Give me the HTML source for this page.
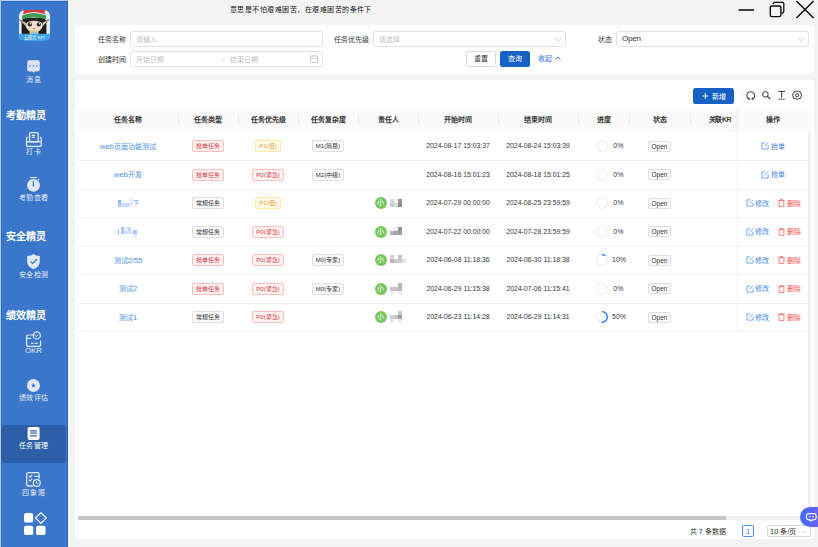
<!DOCTYPE html>
<html lang="zh-CN"><head><meta charset="utf-8"><style>
*{box-sizing:border-box;margin:0;padding:0}
html,body{width:818px;height:547px;overflow:hidden;background:#f3f3f3;font-family:"Liberation Sans",sans-serif;color:#333}
div,span{position:absolute;white-space:nowrap}
svg{position:absolute;overflow:visible}
#side{left:0;top:0;width:68px;height:547px;background:#3a76c9;border-right:1px solid #2864c3}
.sl{left:0;width:67px;text-align:center;color:#e8eef9;font-size:7px;letter-spacing:0.55px;text-indent:0.55px;line-height:9px}
.sh{left:5.5px;color:#fff;font-size:10px;font-weight:bold;line-height:11px}
.card{background:#fff;border-radius:3px}
.lbl{font-size:7px;line-height:9px;color:#333}
.inp{border:1px solid #e0e0e0;border-radius:2.5px;background:#fff;height:16px}
.ph{font-size:7px;line-height:9px;color:#c0c0c0}
.th{top:108px;height:24px;font-size:7px;font-weight:bold;line-height:24px;text-align:center;color:#3a3a3a}
.sep{top:114px;width:1px;height:11px;background:#ebebeb}
.rb{left:78px;width:730px;height:1px;background:#f0f0f0}
.cell{text-align:center;line-height:11px;height:11px}
.nm{color:#4d8fe6;font-size:7px}
.nm b{font-weight:normal;font-size:7.5px}
.tag{position:relative;display:inline-block;height:12px;line-height:10px;font-size:6px;border:1px solid;border-radius:2px;vertical-align:top}
.tr{color:#d6343c;background:#fff3f2;border-color:#ffbdb9}
.ty{color:#e0a22e;background:#fffbeb;border-color:#ffe6a1}
.tg{color:#333;background:#fafafa;border-color:#dedede}
.dt{font-size:6.85px;color:#333;line-height:11px}
.pct{font-size:7px;color:#333;line-height:11px}
.act{font-size:7px;line-height:11px}
</style></head><body>
<div id="side"></div>
<div style="left:1px;top:1px;width:66px;height:1px;background:#2f6cc7"></div>
<div style="left:1px;top:1px;width:1px;height:546px;background:#2f6cc7"></div>
<div style="left:0;top:0;width:68px;height:1px;background:#b7cce9"></div>
<div style="left:0;top:0;width:1px;height:547px;background:#b7cce9"></div>
<svg style="left:19px;top:10px" width="31" height="31" viewBox="0 0 31 31">
<defs><clipPath id="lc"><rect width="31" height="31" rx="6"/></clipPath></defs>
<g clip-path="url(#lc)">
<rect width="31" height="31" fill="#e6eef8"/>
<path d="M2.6 31 L2.6 12 Q3 8 8 8 H22 Q27 8 27.4 12 L27.4 31 Z" fill="#1d1d1d"/>
<path d="M0.2 9.6 L7 12.6 L7.4 17 Z" fill="#f1cdb8" stroke="#333" stroke-width="0.5"/>
<path d="M30 9.6 L23.4 12.6 L23 17 Z" fill="#f1cdb8" stroke="#333" stroke-width="0.5"/>
<ellipse cx="15.2" cy="15.6" rx="8.4" ry="6.6" fill="#f4dccf"/>
<path d="M6.6 13 Q15 8.4 23.8 13 L23.8 10.6 Q15 7.4 6.6 10.6 Z" fill="#1d1d1d"/>
<path d="M4 0 L6 3 Q15 -1 24.6 3 L27 0 Z" fill="#d93a3c"/>
<path d="M3.2 5.4 Q15 0.4 27 5.4 L27.2 9.2 Q15 5.6 3 9.2 Z" fill="#3f9a52"/>
<path d="M3.6 4.6 Q15 -0.6 26.6 4.6 L25 1.6 Q15 -2 5 1.6 Z" fill="#d93a3c"/>
<circle cx="10.8" cy="14.4" r="2.1" fill="#2b2b2b"/><circle cx="19.8" cy="14.4" r="2.1" fill="#2b2b2b"/>
<circle cx="11.3" cy="13.8" r="0.7" fill="#fff"/><circle cx="20.3" cy="13.8" r="0.7" fill="#fff"/>
<path d="M14 18.6 H16.4" stroke="#a55" stroke-width="0.8"/>
<rect x="10.6" y="20.4" width="8.8" height="4.4" fill="#f2d24a"/>
<rect x="12" y="21.2" width="6" height="3" fill="#9cc4ea"/>
<rect x="0" y="23.8" width="31" height="7.2" fill="#3aa4ee"/>
<text x="15.5" y="29.4" font-size="4.2" fill="#fff" text-anchor="middle" font-family="Liberation Sans">云精灵·KPI</text>
</g></svg>
<svg style="left:27px;top:60px" width="13" height="13" viewBox="0 0 13 13">
<path d="M2 0.2 H11 A1.8 1.8 0 0 1 12.8 2 V9.6 A1.8 1.8 0 0 1 11 11.4 H7.6 L6.4 12.7 L5.2 11.4 H2 A1.8 1.8 0 0 1 0.2 9.6 V2 A1.8 1.8 0 0 1 2 0.2 Z" fill="#dde3f0"/>
<rect x="2.3" y="5.2" width="1.5" height="1.5" fill="#6b8cc6"/><rect x="5.7" y="5.2" width="1.5" height="1.5" fill="#6b8cc6"/><rect x="9.3" y="5.2" width="1.5" height="1.5" fill="#6b8cc6"/>
</svg>
<div class="sl" style="top:74.5px">消息</div>
<div class="sh" style="top:110px">考勤精灵</div>
<svg style="left:26px;top:132px" width="16" height="15" viewBox="0 0 16 15">
<rect x="3.6" y="0.6" width="8.6" height="9.2" rx="1.2" fill="none" stroke="#e4e9f5" stroke-width="1.3"/>
<path d="M5.8 3.4 H9 M5.8 5.4 H9" stroke="#e4e9f5" stroke-width="1.1"/>
<path d="M1.7 5.2 Q0.6 5.5 0.6 6.6 V13.2 Q0.6 14.4 1.8 14.4 H14 Q15.2 14.4 15.2 13.2 V6.6 Q15.2 5.5 14.1 5.2" fill="none" stroke="#e4e9f5" stroke-width="1.3"/>
<path d="M1 9.8 H15" stroke="#e4e9f5" stroke-width="1.3"/>
</svg>
<div class="sl" style="top:147px">打卡</div>
<svg style="left:26px;top:177px" width="15" height="15" viewBox="0 0 15 15">
<rect x="4" y="0" width="7" height="1.1" fill="#e0e6f2"/>
<circle cx="7.5" cy="8.3" r="6.4" fill="#e0e6f2"/>
<path d="M11.8 3 L13.2 1.9" stroke="#e0e6f2" stroke-width="1.2"/>
<path d="M7.4 4 V8.6" stroke="#3a76cb" stroke-width="1.1"/>
<circle cx="7.4" cy="8.6" r="0.9" fill="#3a76cb"/>
</svg>
<div class="sl" style="top:192.5px">考勤查看</div>
<div class="sh" style="top:231px">安全精灵</div>
<svg style="left:27px;top:254px" width="14" height="16" viewBox="0 0 14 16">
<path d="M6.5 0 Q4.5 1.8 0.2 2 V7.8 Q0.2 12.8 6.5 15.3 Q12.8 12.8 12.8 7.8 V2 Q8.5 1.8 6.5 0 Z" fill="#e0e6f2"/>
<path d="M3.6 7.4 L5.6 9.4 L9.8 5.3" fill="none" stroke="#3a76cb" stroke-width="1.3"/>
</svg>
<div class="sl" style="top:270px">安全检测</div>
<div class="sh" style="top:309.5px">绩效精灵</div>
<svg style="left:26px;top:331px" width="16" height="16" viewBox="0 0 16 16">
<path d="M9 4 H2.6 Q0.6 4 0.6 6 V13.4 Q0.6 15.4 2.6 15.4 H12.6 Q14.6 15.4 14.6 13.4 V9.4" fill="none" stroke="#e0e6f2" stroke-width="1.2"/>
<path d="M0.8 7.4 H5.2" stroke="#e0e6f2" stroke-width="1.2"/>
<circle cx="10.8" cy="4.4" r="3.6" fill="none" stroke="#e0e6f2" stroke-width="1.2"/>
<path d="M9.2 4.6 L10.4 5.6 L12.4 3.4" fill="none" stroke="#e0e6f2" stroke-width="1"/>
<path d="M5 12.4 H7.6 M8.6 12.4 H11.6" stroke="#e0e6f2" stroke-width="1.1"/>
</svg>
<div class="sl" style="top:346px;font-size:7.8px;letter-spacing:0;text-indent:0">OKR</div>
<svg style="left:27px;top:379px" width="14" height="14" viewBox="0 0 14 14">
<circle cx="6.5" cy="6.5" r="6.5" fill="#e0e6f2"/>
<path d="M6.5 4.1 L7.2 5.7 L8.9 5.8 L7.6 6.9 L8 8.6 L6.5 7.7 L5 8.6 L5.4 6.9 L4.1 5.8 L5.8 5.7 Z" fill="#3a76cb"/>
</svg>
<div class="sl" style="top:393px">绩效评估</div>
<div style="left:1px;top:425px;width:65px;height:38px;background:#2d5fa8;border-radius:4px"></div>
<svg style="left:27px;top:427px" width="13" height="13" viewBox="0 0 13 13">
<rect x="0.6" y="0" width="12" height="12.9" rx="2" fill="#fff"/>
<path d="M3.3 3.8 H9.8 M3.3 6.2 H9.8 M3.3 8.8 H9.8" stroke="#2d5fa8" stroke-width="1.2"/>
</svg>
<div class="sl" style="top:441px;color:#fff">任务管理</div>
<svg style="left:26px;top:472px" width="16" height="16" viewBox="0 0 16 16">
<path d="M7.4 14 H2.4 Q0.7 14 0.7 12.3 V2.4 Q0.7 0.7 2.4 0.7 H11.4 Q13.1 0.7 13.1 2.4 V6.8" fill="none" stroke="#e3e9f5" stroke-width="1.3"/>
<path d="M2.9 3.9 L4.2 5.1 L6.2 3 M2.9 7.8 L4.2 9 L6.2 6.9" fill="none" stroke="#e3e9f5" stroke-width="1.2"/>
<path d="M8.4 4.4 H12.8" stroke="#e3e9f5" stroke-width="1.2"/>
<circle cx="10.8" cy="11" r="3.4" fill="none" stroke="#e3e9f5" stroke-width="1.3"/>
<path d="M10.5 9.4 V11.3 H12.2" fill="none" stroke="#e3e9f5" stroke-width="1"/>
</svg>
<div class="sl" style="top:488px">四象限</div>
<svg style="left:23px;top:512px" width="25" height="25" viewBox="0 0 25 25">
<rect x="1" y="1" width="9.2" height="9.6" rx="2.2" fill="#fff"/>
<rect x="1" y="13.7" width="9.2" height="9.4" rx="2.2" fill="#fff"/>
<rect x="13" y="13.7" width="9.6" height="9.4" rx="2.2" fill="#fff"/>
<path d="M17.9 0.7 L23.3 5.9 L17.9 11.3 L12.5 5.9 Z" fill="none" stroke="#fff" stroke-width="1.2" stroke-linejoin="round"/>
</svg>
<div style="left:230px;top:5px;font-size:7px;letter-spacing:0.47px;line-height:9px;color:#111">意思是不怕艰难困苦，在艰难困苦的条件下</div>
<svg style="left:736px;top:0" width="82" height="20" viewBox="0 0 82 20">
<path d="M2.6 10 H18" stroke="#111" stroke-width="1.6"/>
<rect x="34.3" y="6" width="10.6" height="10.6" rx="1.6" fill="none" stroke="#111" stroke-width="1.4"/>
<path d="M37.2 4.2 V3.8 Q37.2 2.4 38.6 2.4 H46.4 Q47.8 2.4 47.8 3.8 V11.6 Q47.8 13 46.4 13 H45.6" fill="none" stroke="#111" stroke-width="1.3"/>
<path d="M60.4 1 L77.6 18 M77.6 1 L60.4 18" stroke="#111" stroke-width="1.5"/>
</svg>
<div class="card" style="left:75px;top:25px;width:739px;height:49px"></div>
<div class="card" style="left:75px;top:80px;width:739px;height:459px"></div>
<div class="lbl" style="left:98px;top:35px">任务名称</div>
<div class="inp" style="left:130px;top:31px;width:193px"></div>
<div class="ph" style="left:136px;top:35px">请输入</div>
<div class="lbl" style="left:98px;top:55px">创建时间</div>
<div class="inp" style="left:130px;top:51px;width:193px"></div>
<div class="ph" style="left:136px;top:55px">开始日期</div>
<div class="ph" style="left:218px;top:54px;font-size:8px;letter-spacing:0;color:#b8b8b8">&#8594;</div>
<div class="ph" style="left:230px;top:55px">结束日期</div>
<svg style="left:310px;top:55px" width="8" height="8" viewBox="0 0 8 8">
<rect x="0.5" y="1" width="7" height="6.5" rx="0.8" fill="none" stroke="#bbb" stroke-width="0.8"/>
<path d="M0.5 3.2 H7.5 M2.3 0 V1.6 M5.7 0 V1.6" stroke="#bbb" stroke-width="0.8"/>
</svg>
<div class="lbl" style="left:334px;top:35px">任务优先级</div>
<div class="inp" style="left:373px;top:31px;width:193px"></div>
<div class="ph" style="left:379px;top:35px">请选择</div>
<svg style="left:555px;top:36.5px" width="7" height="5" viewBox="0 0 7 5"><path d="M0.5 1 L3.5 4 L6.5 1" fill="none" stroke="#bbb" stroke-width="0.8"/></svg>
<div class="lbl" style="left:598px;top:35px">状态</div>
<div class="inp" style="left:616px;top:31px;width:193px"></div>
<div style="left:622px;top:34px;font-size:8px;line-height:9px;color:#333;letter-spacing:-0.2px">Open</div>
<svg style="left:798px;top:36.5px" width="7" height="5" viewBox="0 0 7 5"><path d="M0.5 1 L3.5 4 L6.5 1" fill="none" stroke="#bbb" stroke-width="0.8"/></svg>
<div style="left:466px;top:51px;width:30px;height:16px;border:1px solid #d9d9d9;border-radius:2.5px;background:#fff;text-align:center;font-size:7px;line-height:14px;color:#333">重置</div>
<div style="left:500px;top:51px;width:30px;height:16px;border-radius:2.5px;background:#1662c4;text-align:center;font-size:7px;line-height:16px;color:#fff">查询</div>
<div style="left:538px;top:54px;font-size:7px;line-height:9px;color:#2a6ad8">收起</div>
<svg style="left:555px;top:56px" width="6" height="4" viewBox="0 0 6 4"><path d="M0.5 3.5 L3 1 L5.5 3.5" fill="none" stroke="#2a6ad8" stroke-width="0.9"/></svg>
<div style="left:693px;top:88px;width:41px;height:16px;border-radius:2.5px;background:#1662c4"></div>
<svg style="left:702px;top:92px" width="7" height="8" viewBox="0 0 7 8"><path d="M0.5 4 H6 M3.25 1.2 V6.8" stroke="#fff" stroke-width="1"/></svg>
<div style="left:712px;top:91.5px;font-size:7px;line-height:9px;color:#fff">新增</div>
<div style="left:742px;top:93px;width:1px;height:5px;background:#e6e6e6"></div>
<svg style="left:746px;top:90px" width="58" height="11" viewBox="0 0 58 11">
<path d="M3.3 9.2 A3.9 3.9 0 1 1 6.2 9.2" fill="none" stroke="#333" stroke-width="1.05"/>
<path d="M2 8.6 L3.6 9.4 L3.2 7.6 M7.4 8.6 L5.9 9.4 L6.3 7.6" fill="none" stroke="#333" stroke-width="0.9"/>
<circle cx="19.4" cy="4.3" r="2.8" fill="none" stroke="#333" stroke-width="1"/>
<path d="M21.4 6.3 L24.2 9" stroke="#333" stroke-width="1.1"/>
<path d="M32.4 1.4 H39 M35.7 1.4 V7.8" stroke="#333" stroke-width="1"/>
<path d="M32.2 9.2 H39.2" stroke="#888" stroke-width="1.3"/>
<path d="M51.1 0.9 L52.6 1.8 L54.3 1.8 L54.9 3.4 L55.6 5.2 L54.9 7 L54.3 8.6 L52.6 8.6 L51.1 9.5 L49.6 8.6 L47.9 8.6 L47.3 7 L46.6 5.2 L47.3 3.4 L47.9 1.8 L49.6 1.8 Z" fill="none" stroke="#333" stroke-width="1" stroke-linejoin="round"/>
<circle cx="51.1" cy="5.2" r="1.6" fill="none" stroke="#333" stroke-width="0.9"/>
</svg>
<div style="left:78px;top:108px;width:733px;height:24px;background:#fafafa;border-radius:3px 3px 0 0"></div>
<div class="th" style="left:78px;width:100px">任务名称</div>
<div class="th" style="left:178px;width:60px">任务类型</div>
<div class="th" style="left:238px;width:60px">任务优先级</div>
<div class="th" style="left:298px;width:60px">任务复杂度</div>
<div class="th" style="left:358px;width:60px">责任人</div>
<div class="th" style="left:418px;width:80px">开始时间</div>
<div class="th" style="left:498px;width:80px">结束时间</div>
<div class="th" style="left:578px;width:51px">进度</div>
<div class="th" style="left:629px;width:61px">状态</div>
<div class="th" style="left:690px;width:60px;letter-spacing:-0.5px;text-indent:0">关联KR</div>
<div class="sep" style="left:178px"></div>
<div class="sep" style="left:238px"></div>
<div class="sep" style="left:298px"></div>
<div class="sep" style="left:358px"></div>
<div class="sep" style="left:418px"></div>
<div class="sep" style="left:498px"></div>
<div class="sep" style="left:578px"></div>
<div class="sep" style="left:629px"></div>
<div class="sep" style="left:690px"></div>
<div class="cell nm" style="left:78px;width:100px;top:140.8px"><b>web</b>页面功能测试</div>
<div class="cell" style="left:178px;width:60px;top:140.2px"><span class="tag tr" style="position:relative;padding:0 3px">抢单任务</span></div>
<div class="cell" style="left:238px;width:60px;top:140.2px"><span class="tag ty" style="position:relative;padding:0 3px">P1(低)</span></div>
<div class="cell" style="left:298px;width:60px;top:140.2px"><span class="tag tg" style="position:relative;padding:0 3px">M1(简易)</span></div>
<div class="cell dt" style="left:418px;width:80px;top:140.2px">2024-08-17 15:03:37</div>
<div class="cell dt" style="left:498px;width:80px;top:140.2px">2024-08-24 15:03:39</div>
<svg style="left:595.5px;top:140.2px" width="12" height="12" viewBox="0 0 12 12"><circle cx="6" cy="6" r="5.3" fill="none" stroke="#eeeeee" stroke-width="1.3"/></svg>
<div class="cell pct" style="left:613.3px;top:140.1px;text-align:left">0%</div>
<div class="cell" style="left:629px;width:61px;top:140.8px"><span class="tag tg" style="position:relative;padding:0 2.5px;font-size:6.5px;height:11px;line-height:9px">Open</span></div>
<svg style="left:761px;top:142.2px" width="8" height="8" viewBox="0 0 8 8"><path d="M4.4 0.9 H0.9 V7.1 H7.1 V3.6" fill="none" stroke="#4a8cef" stroke-width="0.75"/><path d="M3.4 4.6 L7.4 0.6" stroke="#4a8cef" stroke-width="0.75"/></svg>
<div class="cell act" style="left:770.5px;top:140.8px;color:#3d84ec">抢单</div>
<div class="rb" style="top:160.0px"></div>
<div class="cell nm" style="left:78px;width:100px;top:169.2px"><b>web</b>开发</div>
<div class="cell" style="left:178px;width:60px;top:168.8px"><span class="tag tr" style="position:relative;padding:0 3px">抢单任务</span></div>
<div class="cell" style="left:238px;width:60px;top:168.8px"><span class="tag tr" style="position:relative;padding:0 3px">P0(紧急)</span></div>
<div class="cell" style="left:298px;width:60px;top:168.8px"><span class="tag tg" style="position:relative;padding:0 3px">M2(中级)</span></div>
<div class="cell dt" style="left:418px;width:80px;top:168.8px">2024-08-16 15:01:23</div>
<div class="cell dt" style="left:498px;width:80px;top:168.8px">2024-08-18 15:01:25</div>
<svg style="left:595.5px;top:168.8px" width="12" height="12" viewBox="0 0 12 12"><circle cx="6" cy="6" r="5.3" fill="none" stroke="#eeeeee" stroke-width="1.3"/></svg>
<div class="cell pct" style="left:613.3px;top:168.6px;text-align:left">0%</div>
<div class="cell" style="left:629px;width:61px;top:169.2px"><span class="tag tg" style="position:relative;padding:0 2.5px;font-size:6.5px;height:11px;line-height:9px">Open</span></div>
<svg style="left:761px;top:170.8px" width="8" height="8" viewBox="0 0 8 8"><path d="M4.4 0.9 H0.9 V7.1 H7.1 V3.6" fill="none" stroke="#4a8cef" stroke-width="0.75"/><path d="M3.4 4.6 L7.4 0.6" stroke="#4a8cef" stroke-width="0.75"/></svg>
<div class="cell act" style="left:770.5px;top:169.2px;color:#3d84ec">抢单</div>
<div class="rb" style="top:188.5px"></div>
<div style="left:117.5px;top:199.6px;width:3.5px;height:3.5px;background:#8db8f4"></div>
<div style="left:117.5px;top:203.1px;width:3.5px;height:3.5px;background:#b0cdf6"></div>
<div style="left:121px;top:203.1px;width:9px;height:3.5px;background:#cddff9"></div>
<div style="left:124px;top:203.2px;width:3px;height:3px;background:#c3d7f7"></div>
<div style="left:129.5px;top:198.2px;width:3.5px;height:8.3px;background:#e0ebfb"></div>
<div style="left:121px;top:199.6px;width:8.5px;height:3.5px;background:#f7faff"></div>
<div class="cell nm" style="left:132.8px;top:198.1px;width:8px;text-align:left;font-size:6px">下</div>
<div class="cell" style="left:178px;width:60px;top:197.2px"><span class="tag tg" style="position:relative;padding:0 3px">常规任务</span></div>
<div class="cell" style="left:238px;width:60px;top:197.2px"><span class="tag ty" style="position:relative;padding:0 3px">P1(低)</span></div>
<div style="left:374.5px;top:197.1px;width:12.2px;height:12.2px;border-radius:50%;background:#78c75e;color:#fff;font-size:7px;line-height:12px;text-align:center">小</div>
<div style="left:390px;top:198.75px;width:4px;height:4px;background:#e0d8dc"></div>
<div style="left:394px;top:198.75px;width:4px;height:4px;background:#eef3f8"></div>
<div style="left:398px;top:198.75px;width:4px;height:4px;background:#9a9590"></div>
<div style="left:390px;top:202.75px;width:4px;height:4px;background:#d0c8cc"></div>
<div style="left:394px;top:202.75px;width:4px;height:4px;background:#dcdcdc"></div>
<div style="left:398px;top:202.75px;width:4px;height:4px;background:#8f8c88"></div>
<div class="cell dt" style="left:418px;width:80px;top:197.2px">2024-07-29 00:00:00</div>
<div class="cell dt" style="left:498px;width:80px;top:197.2px">2024-08-25 23:59:59</div>
<svg style="left:595.5px;top:197.2px" width="12" height="12" viewBox="0 0 12 12"><circle cx="6" cy="6" r="5.3" fill="none" stroke="#eeeeee" stroke-width="1.3"/></svg>
<div class="cell pct" style="left:613.3px;top:197.1px;text-align:left">0%</div>
<div class="cell" style="left:629px;width:61px;top:197.8px"><span class="tag tg" style="position:relative;padding:0 2.5px;font-size:6.5px;height:11px;line-height:9px">Open</span></div>
<svg style="left:746px;top:199.2px" width="8" height="8" viewBox="0 0 8 8"><path d="M4.4 0.9 H0.9 V7.1 H7.1 V3.6" fill="none" stroke="#4a8cef" stroke-width="0.75"/><path d="M3.4 4.6 L7.4 0.6" stroke="#4a8cef" stroke-width="0.75"/></svg>
<div class="cell act" style="left:755px;top:197.8px;color:#3d84ec">修改</div>
<div style="left:773px;top:200.2px;width:1px;height:6px;background:#f3f3f3"></div>
<svg style="left:777.5px;top:199.2px" width="7" height="8" viewBox="0 0 7 8"><path d="M0.3 1.6 H6.7 M2.3 1.6 V0.5 H4.7 V1.6 M1.1 1.6 V7.4 H5.9 V1.6" fill="none" stroke="#f25a5e" stroke-width="0.75"/></svg>
<div class="cell act" style="left:786.5px;top:197.8px;color:#f5484d">删除</div>
<div class="rb" style="top:217.0px"></div>
<div style="left:117.6px;top:229.2px;width:1.2px;height:5.5px;background:#b9a8e8"></div>
<div style="left:120.5px;top:226.8px;width:3.5px;height:7.5px;background:#a9c7f5"></div>
<div style="left:124px;top:226.8px;width:3.5px;height:3.8px;background:#e6eefc"></div>
<div style="left:124px;top:230.6px;width:3.5px;height:3.7px;background:#d3e2fa"></div>
<div style="left:127.5px;top:226.8px;width:3.5px;height:3.8px;background:#bdd4f7"></div>
<div style="left:127.5px;top:230.6px;width:3.5px;height:3.7px;background:#d3e2fa"></div>
<div style="left:131px;top:230.6px;width:2px;height:3.7px;background:#dce8fb"></div>
<div style="left:133px;top:230.2px;width:4px;height:3.8px;background:#a6c4f4"></div>
<div style="left:133px;top:234.1px;width:4px;height:3.5px;background:#e6eefc"></div>
<div class="cell" style="left:178px;width:60px;top:225.8px"><span class="tag tg" style="position:relative;padding:0 3px">常规任务</span></div>
<div class="cell" style="left:238px;width:60px;top:225.8px"><span class="tag tr" style="position:relative;padding:0 3px">P0(紧急)</span></div>
<div style="left:374.5px;top:225.6px;width:12.2px;height:12.2px;border-radius:50%;background:#78c75e;color:#fff;font-size:7px;line-height:12px;text-align:center">小</div>
<div style="left:390px;top:226.90px;width:4px;height:4px;background:#fbfbf3"></div>
<div style="left:394px;top:226.90px;width:4px;height:4px;background:#f0eef2"></div>
<div style="left:398px;top:226.90px;width:4px;height:4px;background:#8d939c"></div>
<div style="left:390px;top:230.90px;width:4px;height:4px;background:#b8b4b8"></div>
<div style="left:394px;top:230.90px;width:4px;height:4px;background:#aba7a2"></div>
<div style="left:398px;top:230.90px;width:4px;height:4px;background:#98a0a8"></div>
<div class="cell dt" style="left:418px;width:80px;top:225.8px">2024-07-22 00:00:00</div>
<div class="cell dt" style="left:498px;width:80px;top:225.8px">2024-07-28 23:59:59</div>
<svg style="left:595.5px;top:225.8px" width="12" height="12" viewBox="0 0 12 12"><circle cx="6" cy="6" r="5.3" fill="none" stroke="#eeeeee" stroke-width="1.3"/></svg>
<div class="cell pct" style="left:613.3px;top:225.6px;text-align:left">0%</div>
<div class="cell" style="left:629px;width:61px;top:226.2px"><span class="tag tg" style="position:relative;padding:0 2.5px;font-size:6.5px;height:11px;line-height:9px">Open</span></div>
<svg style="left:746px;top:227.8px" width="8" height="8" viewBox="0 0 8 8"><path d="M4.4 0.9 H0.9 V7.1 H7.1 V3.6" fill="none" stroke="#4a8cef" stroke-width="0.75"/><path d="M3.4 4.6 L7.4 0.6" stroke="#4a8cef" stroke-width="0.75"/></svg>
<div class="cell act" style="left:755px;top:226.2px;color:#3d84ec">修改</div>
<div style="left:773px;top:228.8px;width:1px;height:6px;background:#f3f3f3"></div>
<svg style="left:777.5px;top:227.8px" width="7" height="8" viewBox="0 0 7 8"><path d="M0.3 1.6 H6.7 M2.3 1.6 V0.5 H4.7 V1.6 M1.1 1.6 V7.4 H5.9 V1.6" fill="none" stroke="#f25a5e" stroke-width="0.75"/></svg>
<div class="cell act" style="left:786.5px;top:226.2px;color:#f5484d">删除</div>
<div class="rb" style="top:245.5px"></div>
<div class="cell nm" style="left:78px;width:100px;top:254.8px">测试<b>2/55</b></div>
<div class="cell" style="left:178px;width:60px;top:254.2px"><span class="tag tr" style="position:relative;padding:0 3px">抢单任务</span></div>
<div class="cell" style="left:238px;width:60px;top:254.2px"><span class="tag tr" style="position:relative;padding:0 3px">P0(紧急)</span></div>
<div class="cell" style="left:298px;width:60px;top:254.2px"><span class="tag tg" style="position:relative;padding:0 3px">M0(专家)</span></div>
<div style="left:374.5px;top:254.1px;width:12.2px;height:12.2px;border-radius:50%;background:#78c75e;color:#fff;font-size:7px;line-height:12px;text-align:center">小</div>
<div style="left:390px;top:254.90px;width:4px;height:4px;background:#ddd0d8"></div>
<div style="left:398px;top:254.90px;width:4px;height:4px;background:#c8c2c4"></div>
<div style="left:390px;top:258.90px;width:4px;height:4px;background:#c8b4ac"></div>
<div style="left:394px;top:258.90px;width:4px;height:4px;background:#c8c8c8"></div>
<div style="left:398px;top:258.90px;width:4px;height:4px;background:#ccc8cc"></div>
<div style="left:402px;top:258.90px;width:4px;height:4px;background:#d8e6f0"></div>
<div class="cell dt" style="left:418px;width:80px;top:254.2px">2024-06-08 11:18:36</div>
<div class="cell dt" style="left:498px;width:80px;top:254.2px">2024-06-30 11:18:38</div>
<svg style="left:595.5px;top:254.2px" width="12" height="12" viewBox="0 0 12 12"><circle cx="6" cy="6" r="5.3" fill="none" stroke="#eeeeee" stroke-width="1.3"/><circle cx="6" cy="6" r="5.3" fill="none" stroke="#1677ff" stroke-width="1.3" stroke-dasharray="3.33 33.30" transform="rotate(-90 6 6)"/></svg>
<div class="cell pct" style="left:612px;top:254.1px;text-align:left">10%</div>
<div class="cell" style="left:629px;width:61px;top:254.8px"><span class="tag tg" style="position:relative;padding:0 2.5px;font-size:6.5px;height:11px;line-height:9px">Open</span></div>
<svg style="left:746px;top:256.2px" width="8" height="8" viewBox="0 0 8 8"><path d="M4.4 0.9 H0.9 V7.1 H7.1 V3.6" fill="none" stroke="#4a8cef" stroke-width="0.75"/><path d="M3.4 4.6 L7.4 0.6" stroke="#4a8cef" stroke-width="0.75"/></svg>
<div class="cell act" style="left:755px;top:254.8px;color:#3d84ec">修改</div>
<div style="left:773px;top:257.2px;width:1px;height:6px;background:#f3f3f3"></div>
<svg style="left:777.5px;top:256.2px" width="7" height="8" viewBox="0 0 7 8"><path d="M0.3 1.6 H6.7 M2.3 1.6 V0.5 H4.7 V1.6 M1.1 1.6 V7.4 H5.9 V1.6" fill="none" stroke="#f25a5e" stroke-width="0.75"/></svg>
<div class="cell act" style="left:786.5px;top:254.8px;color:#f5484d">删除</div>
<div class="rb" style="top:274.0px"></div>
<div class="cell nm" style="left:78px;width:100px;top:283.2px">测试<b>2</b></div>
<div class="cell" style="left:178px;width:60px;top:282.8px"><span class="tag tr" style="position:relative;padding:0 3px">抢单任务</span></div>
<div class="cell" style="left:238px;width:60px;top:282.8px"><span class="tag tr" style="position:relative;padding:0 3px">P0(紧急)</span></div>
<div class="cell" style="left:298px;width:60px;top:282.8px"><span class="tag tg" style="position:relative;padding:0 3px">M0(专家)</span></div>
<div style="left:374.5px;top:282.6px;width:12.2px;height:12.2px;border-radius:50%;background:#78c75e;color:#fff;font-size:7px;line-height:12px;text-align:center">小</div>
<div style="left:398px;top:282.60px;width:4px;height:4px;background:#b8b8b8"></div>
<div style="left:390px;top:286.60px;width:4px;height:4px;background:#c8c0c4"></div>
<div style="left:394px;top:286.60px;width:4px;height:4px;background:#c0bcbc"></div>
<div style="left:398px;top:286.60px;width:4px;height:4px;background:#b8b8b8"></div>
<div style="left:390px;top:290.60px;width:4px;height:4px;background:#e8f0f8"></div>
<div style="left:398px;top:290.60px;width:4px;height:4px;background:#efefef"></div>
<div class="cell dt" style="left:418px;width:80px;top:282.8px">2024-06-29 11:15:38</div>
<div class="cell dt" style="left:498px;width:80px;top:282.8px">2024-07-06 11:15:41</div>
<svg style="left:595.5px;top:282.8px" width="12" height="12" viewBox="0 0 12 12"><circle cx="6" cy="6" r="5.3" fill="none" stroke="#eeeeee" stroke-width="1.3"/></svg>
<div class="cell pct" style="left:613.3px;top:282.6px;text-align:left">0%</div>
<div class="cell" style="left:629px;width:61px;top:283.2px"><span class="tag tg" style="position:relative;padding:0 2.5px;font-size:6.5px;height:11px;line-height:9px">Open</span></div>
<svg style="left:746px;top:284.8px" width="8" height="8" viewBox="0 0 8 8"><path d="M4.4 0.9 H0.9 V7.1 H7.1 V3.6" fill="none" stroke="#4a8cef" stroke-width="0.75"/><path d="M3.4 4.6 L7.4 0.6" stroke="#4a8cef" stroke-width="0.75"/></svg>
<div class="cell act" style="left:755px;top:283.2px;color:#3d84ec">修改</div>
<div style="left:773px;top:285.8px;width:1px;height:6px;background:#f3f3f3"></div>
<svg style="left:777.5px;top:284.8px" width="7" height="8" viewBox="0 0 7 8"><path d="M0.3 1.6 H6.7 M2.3 1.6 V0.5 H4.7 V1.6 M1.1 1.6 V7.4 H5.9 V1.6" fill="none" stroke="#f25a5e" stroke-width="0.75"/></svg>
<div class="cell act" style="left:786.5px;top:283.2px;color:#f5484d">删除</div>
<div class="rb" style="top:302.5px"></div>
<div class="cell nm" style="left:78px;width:100px;top:311.8px">测试<b>1</b></div>
<div class="cell" style="left:178px;width:60px;top:311.2px"><span class="tag tg" style="position:relative;padding:0 3px">常规任务</span></div>
<div class="cell" style="left:238px;width:60px;top:311.2px"><span class="tag tr" style="position:relative;padding:0 3px">P0(紧急)</span></div>
<div style="left:374.5px;top:311.1px;width:12.2px;height:12.2px;border-radius:50%;background:#78c75e;color:#fff;font-size:7px;line-height:12px;text-align:center">小</div>
<div style="left:398px;top:311.00px;width:4px;height:4px;background:#c8c8c8"></div>
<div style="left:390px;top:315.00px;width:4px;height:4px;background:#d0d0d8"></div>
<div style="left:394px;top:315.00px;width:4px;height:4px;background:#c8c0b8"></div>
<div style="left:398px;top:315.00px;width:4px;height:4px;background:#98a4a4"></div>
<div style="left:390px;top:319.00px;width:4px;height:4px;background:#e8e8f0"></div>
<div style="left:398px;top:319.00px;width:4px;height:4px;background:#e4ecf0"></div>
<div class="cell dt" style="left:418px;width:80px;top:311.2px">2024-06-23 11:14:28</div>
<div class="cell dt" style="left:498px;width:80px;top:311.2px">2024-06-29 11:14:31</div>
<svg style="left:595.5px;top:311.2px" width="12" height="12" viewBox="0 0 12 12"><circle cx="6" cy="6" r="5.3" fill="none" stroke="#eeeeee" stroke-width="1.3"/><circle cx="6" cy="6" r="5.3" fill="none" stroke="#1677ff" stroke-width="1.3" stroke-dasharray="16.65 33.30" transform="rotate(-90 6 6)"/></svg>
<div class="cell pct" style="left:612px;top:311.1px;text-align:left">50%</div>
<div class="cell" style="left:629px;width:61px;top:311.8px"><span class="tag tg" style="position:relative;padding:0 2.5px;font-size:6.5px;height:11px;line-height:9px">Open</span></div>
<svg style="left:746px;top:313.2px" width="8" height="8" viewBox="0 0 8 8"><path d="M4.4 0.9 H0.9 V7.1 H7.1 V3.6" fill="none" stroke="#4a8cef" stroke-width="0.75"/><path d="M3.4 4.6 L7.4 0.6" stroke="#4a8cef" stroke-width="0.75"/></svg>
<div class="cell act" style="left:755px;top:311.8px;color:#3d84ec">修改</div>
<div style="left:773px;top:314.2px;width:1px;height:6px;background:#f3f3f3"></div>
<svg style="left:777.5px;top:313.2px" width="7" height="8" viewBox="0 0 7 8"><path d="M0.3 1.6 H6.7 M2.3 1.6 V0.5 H4.7 V1.6 M1.1 1.6 V7.4 H5.9 V1.6" fill="none" stroke="#f25a5e" stroke-width="0.75"/></svg>
<div class="cell act" style="left:786.5px;top:311.8px;color:#f5484d">删除</div>
<div class="rb" style="top:331.0px"></div>
<div style="left:735px;top:108px;width:3px;height:223px;background:linear-gradient(to right,rgba(0,0,0,0),rgba(0,0,0,0.04))"></div>
<div class="th" style="left:738px;width:70px">操作</div>
<div style="left:808px;top:132px;width:3.4px;height:388px;background:#f1f1f1"></div>
<div style="left:78px;top:516px;width:732px;height:3.6px;background:#f1f1f1"></div>
<div style="left:78px;top:516px;width:648px;height:3.6px;background:#c6c6c6;border-radius:1px"></div>
<div style="left:689.5px;top:526.5px;font-size:7px;line-height:9px;color:#333">共<span style="position:static;font-size:7.5px"> 7 </span>条数据</div>
<div style="left:742px;top:525px;width:12px;height:12px;border:1px solid #4a8ff5;border-radius:2px;text-align:center;font-size:7.5px;line-height:11px;color:#2f7bf0">1</div>
<div style="left:767px;top:525px;width:44px;height:12px;border:1px solid #d9d9d9;border-radius:2px"></div>
<div style="left:770px;top:526.5px;font-size:7px;line-height:9px;color:#333"><span style="position:static;font-size:7.5px">10 </span>条/页</div>
<svg style="left:800.5px;top:529.5px" width="5" height="4" viewBox="0 0 5 4"><path d="M0.4 0.8 L2.5 3 L4.6 0.8" fill="none" stroke="#c4c4c4" stroke-width="0.7"/></svg>
<div style="left:800px;top:507px;width:30px;height:20px;border-radius:10px;background:linear-gradient(to right,#3d6bff,#8d5cf5)"></div>
<svg style="left:806px;top:513px" width="11" height="9" viewBox="0 0 11 9"><path d="M2.6 0.7 H7.8 Q9.8 0.7 10 2.4 Q10.5 3.8 10 5.2 Q9.8 6.8 7.8 6.8 H6.2 L4.9 7.9 L4 6.8 H2.6 Q0.8 6.8 0.6 5.2 Q0.1 3.8 0.6 2.4 Q0.8 0.7 2.6 0.7 Z" fill="none" stroke="#fff" stroke-width="1.2"/><path d="M2.9 3.7 H4.9 M5.9 3.7 H7.9" stroke="#fff" stroke-width="0.8"/></svg>
</body></html>
